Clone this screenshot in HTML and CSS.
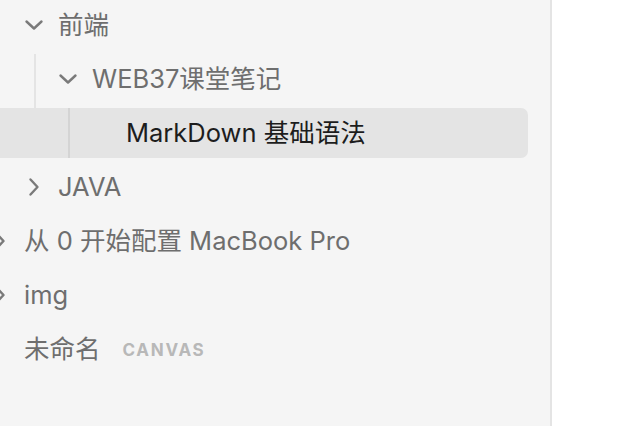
FILE: index.html
```html
<!DOCTYPE html>
<html lang="zh-CN">
<head>
<meta charset="utf-8">
<title>Sidebar</title>
<link rel="stylesheet" href="styles.css">
</head>
<body>
<div class="app">
  <aside class="sidebar">
    <ul class="tree">
      <li>
        <div class="row l1">
          <span class="chev"><svg viewBox="0 0 20 20"><path d="M2.5 6.5 L10 13.5 L17.5 6.5"/></svg></span>
          <span class="label">前端</span>
        </div>
        <ul class="children g1">
          <li>
            <div class="row l2">
              <span class="chev"><svg viewBox="0 0 20 20"><path d="M2.5 6.5 L10 13.5 L17.5 6.5"/></svg></span>
              <span class="label">WEB37课堂笔记</span>
            </div>
            <ul class="children g2">
              <li>
                <div class="row l3 selected">
                  <span class="chev"></span>
                  <span class="label">MarkDown 基础语法</span>
                </div>
              </li>
            </ul>
          </li>
        </ul>
      </li>
      <li>
        <div class="row l1">
          <span class="chev"><svg viewBox="0 0 20 20"><path d="M6.5 2.5 L13.5 10 L6.5 17.5"/></svg></span>
          <span class="label">JAVA</span>
        </div>
      </li>
      <li>
        <div class="row l0">
          <span class="chev"><svg viewBox="0 0 20 20"><path d="M6.5 2.5 L13.5 10 L6.5 17.5"/></svg></span>
          <span class="label">从 0 开始配置 MacBook Pro</span>
        </div>
      </li>
      <li>
        <div class="row l0">
          <span class="chev"><svg viewBox="0 0 20 20"><path d="M6.5 2.5 L13.5 10 L6.5 17.5"/></svg></span>
          <span class="label">img</span>
        </div>
      </li>
      <li>
        <div class="row l0">
          <span class="chev"></span>
          <span class="label">未命名</span>
          <span class="badge">CANVAS</span>
        </div>
      </li>
    </ul>
  </aside>
  <main class="content"></main>
</div>
</body>
</html>
```
FILE: styles.css
```css
* { box-sizing: border-box; }
html, body {
  margin: 0;
  padding: 0;
  background: #ffffff;
}
body {
  font-family: Inter, "Noto Sans CJK SC", "Noto Sans", sans-serif;
  overflow: hidden;
}
.app {
  display: flex;
  height: 426px;
}
.sidebar {
  width: 552px;
  flex: none;
  height: 100%;
  background: #f5f5f5;
  border-right: 2px solid #e4e4e4;
  overflow: hidden;
}
.content {
  flex: 1;
  background: #ffffff;
}
.tree, .children, .tree li {
  list-style: none;
  margin: 0;
  padding: 0;
  display: flex;
  flex-direction: column;
}
.tree {
  margin: -2px 22px 0 -10px;
}
.children {
  position: relative;
}
.children::before {
  content: "";
  position: absolute;
  top: 2px;
  bottom: 2px;
  width: 2px;
  background: rgba(0, 0, 0, 0.065);
}
.g1::before { left: 44px; }
.g2::before { left: 78px; }
.row {
  display: flex;
  align-items: center;
  height: 50px;
  margin: 2px 0;
  border-radius: 7px;
  color: #6e6e6e;
  font-size: 25.5px;
  white-space: nowrap;
}
.row.l0 { padding-left: 0; }
.row.l1 { padding-left: 34px; }
.row.l2 { padding-left: 68px; }
.row.l3 { padding-left: 102px; }
.row.selected {
  background: #e4e4e4;
  color: #1d1d1d;
}
.chev {
  width: 20px;
  height: 20px;
  flex: none;
  margin-right: 14px;
  display: flex;
}
.chev svg {
  width: 20px;
  height: 20px;
  fill: none;
  stroke: #7a7a7a;
  stroke-width: 2.4;
  stroke-linecap: round;
  stroke-linejoin: round;
}
.label {
  line-height: 1;
}
.badge {
  margin-left: 22px;
  font-size: 17px;
  font-weight: 700;
  letter-spacing: 1.7px;
  color: #b8b8b8;
  font-family: Inter, "Noto Sans", sans-serif;
  padding-top: 2px;
}
```
